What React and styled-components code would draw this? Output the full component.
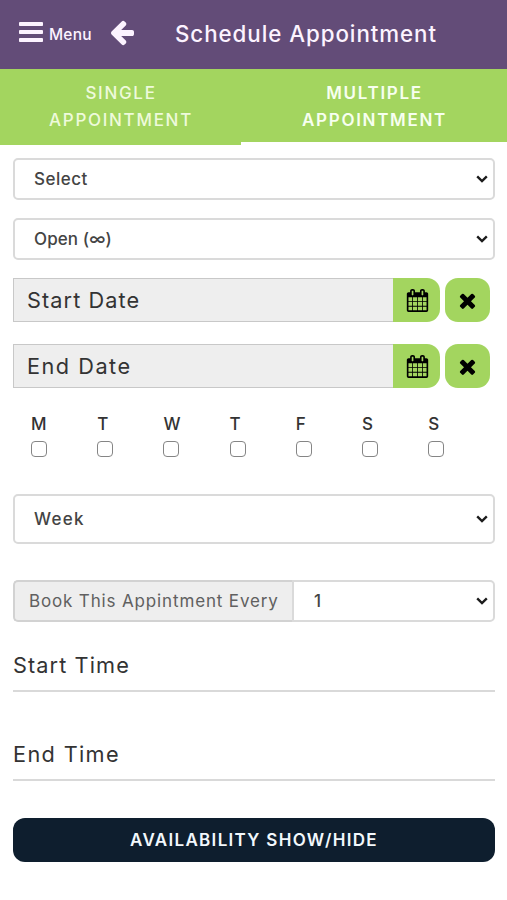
import React, { useState } from 'react';
import styled, { createGlobalStyle } from 'styled-components';

const ICONS = {
	bars: 'M1664 1344v128q0 26-19 45t-45 19h-1408q-26 0-45-19t-19-45v-128q0-26 19-45t45-19h1408q26 0 45 19t19 45zM1664 832v128q0 26-19 45t-45 19h-1408q-26 0-45-19t-19-45v-128q0-26 19-45t45-19h1408q26 0 45 19t19 45zM1664 320v128q0 26-19 45t-45 19h-1408q-26 0-45-19t-19-45v-128q0-26 19-45t45-19h1408q26 0 45 19t19 45z',
	back: 'M1664 896v128q0 53-32.5 90.5t-84.5 37.5h-704l293 294q38 36 38 90t-38 90l-75 76q-37 37-90 37-52 0-91-37l-651-652q-37-37-37-90 0-52 37-91l651-650q38-38 91-38 52 0 90 38l75 74q38 38 38 91t-38 91l-293 293h704q52 0 84.5 37.5t32.5 90.5z',
	calendar:
		'M192 1664h288v-288h-288v288zM544 1664h320v-288h-320v288zM192 1312h288v-320h-288v320zM544 1312h320v-320h-320v320zM192 928h288v-288h-288v288zM928 1664h320v-288h-320v288zM544 928h320v-288h-320v288zM1312 1664h288v-288h-288v288zM928 1312h320v-320h-320v320zM576 448v-288q0-13-9.5-22.5t-22.5-9.5h-64q-13 0-22.5 9.5t-9.5 22.5v288q0 13 9.5 22.5t22.5 9.5h64q13 0 22.5-9.5t9.5-22.5zM1312 1312h288v-320h-288v320zM928 928h320v-288h-320v288zM1312 928h288v-288h-288v288zM1344 448v-288q0-13-9.5-22.5t-22.5-9.5h-64q-13 0-22.5 9.5t-9.5 22.5v288q0 13 9.5 22.5t22.5 9.5h64q13 0 22.5-9.5t9.5-22.5zM1728 384v1280q0 52-38 90t-90 38h-1408q-52 0-90-38t-38-90v-1280q0-52 38-90t90-38h128v-96q0-66 47-113t113-47h64q66 0 113 47t47 113v96h384v-96q0-66 47-113t113-47h64q66 0 113 47t47 113v96h128q52 0 90 38t38 90z',
	times: 'M1490 1322q0 40-28 68l-136 136q-28 28-68 28t-68-28l-294-294-294 294q-28 28-68 28t-68-28l-136-136q-28-28-28-68t28-68l294-294-294-294q-28-28-28-68t28-68l136-136q28-28 68-28t68 28l294 294 294-294q28-28 68-28t68 28l136 136q28 28 28 68t-28 68l-294 294 294 294q28 28 28 68z',
};

const DAYS = ['M', 'T', 'W', 'T', 'F', 'S', 'S'];

const Icon = ({ name, size }) => (
	<svg width={size} height={size} viewBox='0 0 1792 1792' fill='currentColor' fillRule='evenodd'>
		<path d={ICONS[name]} />
	</svg>
);

const SelectField = ({ options, tall, joined, spacing }) => (
	<SelectBox $tall={tall} $joined={joined} $spacing={spacing}>
		<select>
			{options.map(option => (
				<option key={option}>{option}</option>
			))}
		</select>
		<svg width='12' height='8' viewBox='0 0 12 8'>
			<path d='M1.2 1.4 L6 6 L10.8 1.4' fill='none' stroke='#1c1c1c' strokeWidth='2.4' />
		</svg>
	</SelectBox>
);

const DateField = ({ label, spacing }) => (
	<DateRow>
		<DateInput readOnly placeholder={label} $spacing={spacing} />
		<DateButton $attached>
			<Icon name='calendar' size={23} />
		</DateButton>
		<DateButton>
			<Icon name='times' size={23} />
		</DateButton>
	</DateRow>
);

const App = () => {
	const [tab, setTab] = useState('multiple');

	return (
		<>
			<GlobalStyle />
			<Header>
				<MenuButton>
					<Icon name='bars' size={28} />
					<span>Menu</span>
				</MenuButton>
				<BackButton>
					<Icon name='back' size={28} />
				</BackButton>
				<Title>Schedule Appointment</Title>
			</Header>
			<Tabs>
				<Tab $active={tab === 'single'} onClick={() => setTab('single')}>
					SINGLE
					<br />
					APPOINTMENT
				</Tab>
				<Tab $active={tab === 'multiple'} onClick={() => setTab('multiple')}>
					MULTIPLE
					<br />
					APPOINTMENT
				</Tab>
			</Tabs>
			<Form>
				<SelectField options={['Select']} spacing='0.5px' />
				<SelectField options={['Open (∞)']} spacing='0.1px' />
				<DateField label='Start Date' spacing='1.1px' />
				<DateField label='End Date' spacing='1.5px' />
				<Days>
					{DAYS.map((day, index) => (
						<Day key={index}>
							{day}
							<input type='checkbox' />
						</Day>
					))}
				</Days>
				<SelectField options={['Week']} tall spacing='1.3px' />
				<Repeat>
					<RepeatLabel>Book This Appintment Every</RepeatLabel>
					<SelectField options={['1']} joined />
				</Repeat>
				<TimeField $spacing='1.1px'>Start Time</TimeField>
				<TimeField $spacing='1.35px'>End Time</TimeField>
				<SubmitButton>AVAILABILITY SHOW/HIDE</SubmitButton>
			</Form>
		</>
	);
};

export default App;

const GlobalStyle = createGlobalStyle`
	* {
		box-sizing: border-box;
	}
	body {
		margin: 0;
		background-color: #fff;
		color: #333;
		font-family: Inter, 'Open Sans', sans-serif;
	}
	button, input, select {
		font-family: inherit;
		margin: 0;
		border: none;
		padding: 0;
	}
	svg {
		display: block;
		flex: none;
	}
`;

const Header = styled.header`
	display: flex;
	align-items: center;
	height: 69px;
	padding: 0 0 5px 17px;
	background-color: #634c78;
	color: #fcf3ff;
`;

const MenuButton = styled.button`
	display: flex;
	align-items: center;
	width: 91px;
	background: none;
	color: inherit;
	font-size: 15.5px;
	font-weight: 500;
	letter-spacing: 0.2px;
	span {
		margin: 5px 0 0 4px;
	}
`;

const BackButton = styled.button`
	width: 28px;
	background: none;
	color: inherit;
`;

const Title = styled.h1`
	margin: 3px 0 0 39px;
	font-size: 22.3px;
	font-weight: 500;
	letter-spacing: 0.95px;
	white-space: nowrap;
`;

const Tabs = styled.nav`
	display: grid;
	grid-template-columns: 241px 1fr;
	height: 76px;
	background-color: #a3d55f;
`;

const Tab = styled.button`
	padding: 9px 0 7px 1px;
	border-bottom: 3px solid ${({ $active }) => ($active ? '#fff' : 'transparent')};
	background: none;
	color: ${({ $active }) => ($active ? '#f7fff0' : '#eefadb')};
	font-size: 17px;
	font-weight: ${({ $active }) => ($active ? 600 : 500)};
	letter-spacing: 1.7px;
	line-height: 27px;
`;

const Form = styled.main`
	display: flex;
	flex-direction: column;
	padding: 13px 12px 0 13px;
`;

const SelectBox = styled.div`
	display: flex;
	align-items: center;
	flex: ${({ $joined }) => ($joined ? 1 : 'none')};
	height: ${({ $tall }) => ($tall ? '50px' : '42px')};
	margin-bottom: ${({ $tall, $joined }) => ($joined ? 0 : $tall ? '36px' : '18px')};
	padding-right: 5px;
	border: 2px solid #dadada;
	border-radius: ${({ $joined }) => ($joined ? '0 5px 5px 0' : '5px')};
	background-color: #fff;
	select {
		flex: 1;
		height: 100%;
		padding-left: ${({ $joined }) => ($joined ? '20px' : '19px')};
		outline: none;
		appearance: none;
		background: none;
		color: #444;
		font-size: 17px;
		font-weight: 500;
		letter-spacing: ${({ $spacing }) => $spacing || 'normal'};
	}
`;

const DateRow = styled.div`
	display: flex;
	height: 44px;
	margin-bottom: 22px;
`;

const DateInput = styled.input`
	width: 380px;
	padding-left: 13px;
	border: 1px solid #c8c8c8;
	border-right: none;
	outline: none;
	background-color: #eee;
	font-size: 21.7px;
	letter-spacing: ${({ $spacing }) => $spacing};
	&::placeholder {
		color: #333;
		opacity: 1;
	}
`;

const DateButton = styled.button`
	display: flex;
	align-items: center;
	justify-content: center;
	width: ${({ $attached }) => ($attached ? '47px' : '45px')};
	margin-right: 5px;
	border-radius: ${({ $attached }) => ($attached ? '0 13px 13px 0' : '13px')};
	background-color: #a3d55f;
	color: #000;
	svg {
		margin: ${({ $attached }) => ($attached ? '0 0 0 2px' : '0')};
	}
`;

const Days = styled.div`
	display: grid;
	grid-template-columns: repeat(7, 66.2px);
	height: 84px;
	padding: 1px 0 0 18px;
`;

const Day = styled.label`
	display: flex;
	flex-direction: column;
	font-size: 17px;
	font-weight: 500;
	line-height: 27px;
	input {
		appearance: none;
		width: 16px;
		height: 16px;
		margin: 3px 0 0;
		border: 1.5px solid #858585;
		border-radius: 4px;
		background-color: #fff;
		&:checked {
			background-color: #a3d55f;
		}
	}
`;

const Repeat = styled.div`
	display: flex;
	margin-bottom: 25px;
`;

const RepeatLabel = styled.span`
	display: flex;
	align-items: center;
	width: 279px;
	padding-left: 14px;
	border: 2px solid #d2d2d2;
	border-right: none;
	border-radius: 5px 0 0 5px;
	background-color: #eee;
	color: #606060;
	font-size: 17px;
	letter-spacing: 0.85px;
	white-space: nowrap;
`;

const TimeField = styled.div`
	height: 45px;
	margin-bottom: 44px;
	border-bottom: 2px solid #d9d9d9;
	font-size: 21.7px;
	letter-spacing: ${({ $spacing }) => $spacing};
	line-height: 36px;
`;

const SubmitButton = styled.button`
	height: 44px;
	margin-top: -7px;
	border-radius: 12px;
	background-color: #0e1e2e;
	color: #f2f8fc;
	font-size: 17px;
	font-weight: 600;
	letter-spacing: 1.3px;
`;
